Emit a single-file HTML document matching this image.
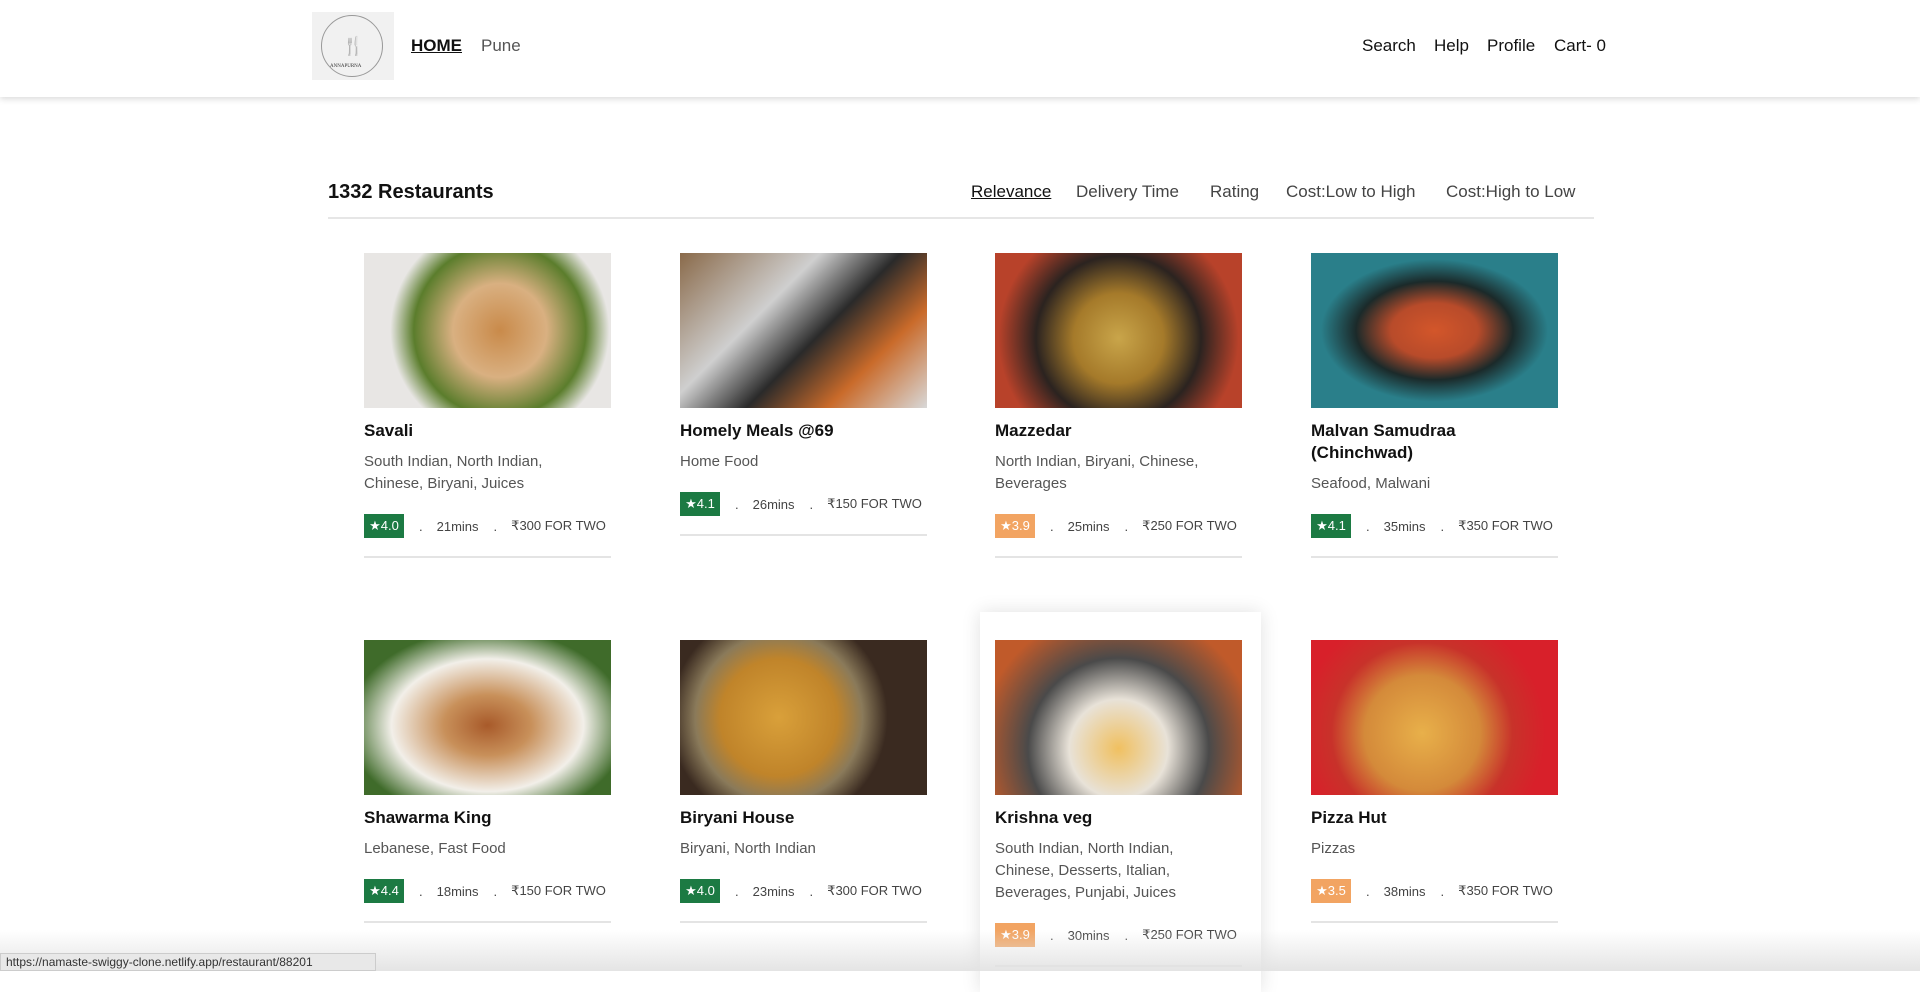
<!DOCTYPE html>
<html><head><meta charset="utf-8"><style>
*{margin:0;padding:0;box-sizing:border-box}
body{width:1920px;height:971px;overflow:hidden;background:#fff;font-family:"Liberation Sans",Arial,sans-serif;color:#111;position:relative}
.hdr{position:absolute;left:0;top:0;width:1920px;height:97px;background:#fff;box-shadow:0 2px 6px rgba(0,0,0,.15)}
.logo{position:absolute;left:312px;top:12px;width:82px;height:68px;background:#f1f1f1}
.logo .c{position:absolute;left:9px;top:3px;width:62px;height:62px;border:1px solid #999;border-radius:50%}
.nav{position:absolute;top:36px;font-size:17px;color:#111}
.sort{position:absolute;top:182px;font-size:17px;color:#444}
.card{position:absolute;width:247px}
.img{width:247px;height:155px}
.nm{font-size:17px;font-weight:bold;line-height:22px;margin-top:12px}
.cu{font-size:15px;color:#555;line-height:22px;margin-top:9px}
.meta{display:flex;align-items:center;font-size:13px;color:#444;margin-top:19px;padding-bottom:18px;border-bottom:2px solid #e4e4e4;white-space:nowrap}
.b{width:40px;height:24px;color:#fff;font-size:13px;display:flex;align-items:center;justify-content:center;background:#1c7a43;flex:none}
.b.o{background:#f2a462}
.d{margin:0 14px 0 15px}
</style></head><body>
<div class="hdr">
<div class="logo"><div class="c"></div><div style="position:absolute;left:30px;top:24px;font-size:18px;color:#777">🍴</div><div style="position:absolute;left:18px;top:52px;font-size:5px;color:#333;font-family:'Liberation Serif'">ANNAPURNA</div></div>
<div class="nav" style="left:411px;font-weight:bold;text-decoration:underline">HOME</div>
<div class="nav" style="left:481px;color:#555">Pune</div>
<div class="nav" style="left:1362px">Search</div>
<div class="nav" style="left:1434px">Help</div>
<div class="nav" style="left:1487px">Profile</div>
<div class="nav" style="left:1554px">Cart- 0</div>
</div>
<div style="position:absolute;left:328px;top:181px;font-size:20px;font-weight:bold">1332 Restaurants</div>
<div class="sort" style="left:971px;color:#111;text-decoration:underline">Relevance</div>
<div class="sort" style="left:1076px">Delivery Time</div>
<div class="sort" style="left:1210px">Rating</div>
<div class="sort" style="left:1286px">Cost:Low to High</div>
<div class="sort" style="left:1446px">Cost:High to Low</div>
<div style="position:absolute;left:328px;top:217px;width:1266px;height:2px;background:#e6e6e6"></div>

<div style="position:absolute;left:980px;top:612px;width:281px;height:380px;box-shadow:0 0 18px rgba(0,0,0,.12);background:#fff"></div>

<div class="card" style="left:364px;top:253px"><div class="img" style="background:radial-gradient(circle at 55% 50%,#c98a4a 0,#d9b081 30%,#5b7d2c 55%,#e8e6e4 70%)"></div><div class="nm">Savali</div><div class="cu">South Indian, North Indian,<br>Chinese, Biryani, Juices</div><div class="meta"><span class="b">★4.0</span><span class="d">.</span>21mins<span class="d">.</span>₹300 FOR TWO</div></div>
<div class="card" style="left:680px;top:253px"><div class="img" style="background:linear-gradient(135deg,#8a6a4a,#cfcfcf 35%,#2a2a2a 55%,#c96a2a 75%,#d8d8d8)"></div><div class="nm">Homely Meals @69</div><div class="cu">Home Food</div><div class="meta"><span class="b">★4.1</span><span class="d">.</span>26mins<span class="d">.</span>₹150 FOR TWO</div></div>
<div class="card" style="left:995px;top:253px"><div class="img" style="background:radial-gradient(circle at 50% 55%,#c9a54a 0,#a57a2a 30%,#2b2320 55%,#b8422a 80%)"></div><div class="nm">Mazzedar</div><div class="cu">North Indian, Biryani, Chinese,<br>Beverages</div><div class="meta"><span class="b o">★3.9</span><span class="d">.</span>25mins<span class="d">.</span>₹250 FOR TWO</div></div>
<div class="card" style="left:1311px;top:253px"><div class="img" style="background:radial-gradient(ellipse at 50% 50%,#d3562a 0,#b84b2a 25%,#1b2a2a 45%,#2a7f8a 65%)"></div><div class="nm">Malvan Samudraa<br>(Chinchwad)</div><div class="cu">Seafood, Malwani</div><div class="meta"><span class="b">★4.1</span><span class="d">.</span>35mins<span class="d">.</span>₹350 FOR TWO</div></div>

<div class="card" style="left:364px;top:640px"><div class="img" style="background:radial-gradient(ellipse at 50% 55%,#a85a2a 0,#c8905a 25%,#f2efe9 55%,#3f6b2a 80%)"></div><div class="nm">Shawarma King</div><div class="cu">Lebanese, Fast Food</div><div class="meta"><span class="b">★4.4</span><span class="d">.</span>18mins<span class="d">.</span>₹150 FOR TWO</div></div>
<div class="card" style="left:680px;top:640px"><div class="img" style="background:radial-gradient(circle at 40% 50%,#d9a03a 0,#c0842a 35%,#8a7a5a 50%,#3a2a20 65%)"></div><div class="nm">Biryani House</div><div class="cu">Biryani, North Indian</div><div class="meta"><span class="b">★4.0</span><span class="d">.</span>23mins<span class="d">.</span>₹300 FOR TWO</div></div>
<div class="card" style="left:995px;top:640px"><div class="img" style="background:radial-gradient(circle at 50% 70%,#f0c060 0,#e8e2d8 30%,#4a4a4a 55%,#c05a2a 85%)"></div><div class="nm">Krishna veg</div><div class="cu">South Indian, North Indian,<br>Chinese, Desserts, Italian,<br>Beverages, Punjabi, Juices</div><div class="meta"><span class="b o">★3.9</span><span class="d">.</span>30mins<span class="d">.</span>₹250 FOR TWO</div></div>
<div class="card" style="left:1311px;top:640px"><div class="img" style="background:radial-gradient(circle at 45% 60%,#e8b04a 0,#d48a3a 35%,#c8322a 55%,#d8202a 75%)"></div><div class="nm">Pizza Hut</div><div class="cu">Pizzas</div><div class="meta"><span class="b o">★3.5</span><span class="d">.</span>38mins<span class="d">.</span>₹350 FOR TWO</div></div>

<div style="position:absolute;left:0;top:930px;width:1920px;height:41px;background:linear-gradient(rgba(255,255,255,0),rgba(225,225,225,.9))"></div>
<div style="position:absolute;left:0;top:953px;width:376px;height:18px;background:#e8e8e8;border:1px solid #ccc;font-size:12px;color:#333;padding:2px 5px;line-height:13px">https://namaste-swiggy-clone.netlify.app/restaurant/88201</div>
</body></html>
